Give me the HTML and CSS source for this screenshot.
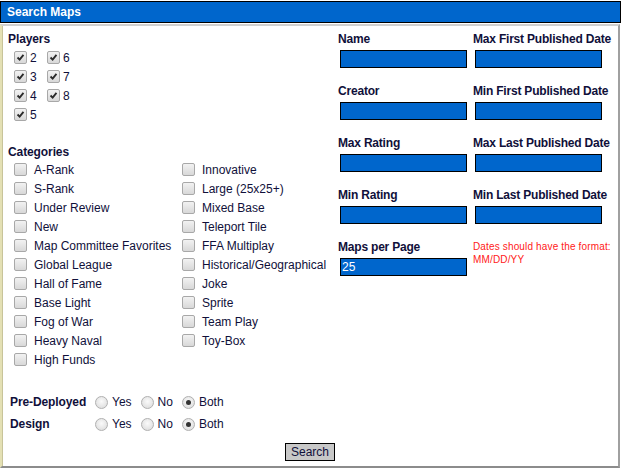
FILE: index.html
```html
<!DOCTYPE html>
<html>
<head>
<meta charset="utf-8">
<link rel="stylesheet" href="styles.css">
</head>
<body>
<div class="header">Search Maps</div>
<div class="box">
  <div class="top">
    <div class="left">
      <div class="heading">Players</div>
      <div class="players">
        <label class="item"><span class="cb on"><svg viewBox="0 0 13 13"><path d="M3 6.5 L5.5 9 L10 3.5" /></svg></span><span>2</span></label>
        <label class="item"><span class="cb on"><svg viewBox="0 0 13 13"><path d="M3 6.5 L5.5 9 L10 3.5" /></svg></span><span>3</span></label>
        <label class="item"><span class="cb on"><svg viewBox="0 0 13 13"><path d="M3 6.5 L5.5 9 L10 3.5" /></svg></span><span>4</span></label>
        <label class="item"><span class="cb on"><svg viewBox="0 0 13 13"><path d="M3 6.5 L5.5 9 L10 3.5" /></svg></span><span>5</span></label>
        <label class="item"><span class="cb on"><svg viewBox="0 0 13 13"><path d="M3 6.5 L5.5 9 L10 3.5" /></svg></span><span>6</span></label>
        <label class="item"><span class="cb on"><svg viewBox="0 0 13 13"><path d="M3 6.5 L5.5 9 L10 3.5" /></svg></span><span>7</span></label>
        <label class="item"><span class="cb on"><svg viewBox="0 0 13 13"><path d="M3 6.5 L5.5 9 L10 3.5" /></svg></span><span>8</span></label>
      </div>
      <div class="heading cat-heading">Categories</div>
      <div class="cats">
        <div class="cat-col first">
          <label class="item"><span class="cb"></span><span>A-Rank</span></label>
          <label class="item"><span class="cb"></span><span>S-Rank</span></label>
          <label class="item"><span class="cb"></span><span>Under Review</span></label>
          <label class="item"><span class="cb"></span><span>New</span></label>
          <label class="item"><span class="cb"></span><span>Map Committee Favorites</span></label>
          <label class="item"><span class="cb"></span><span>Global League</span></label>
          <label class="item"><span class="cb"></span><span>Hall of Fame</span></label>
          <label class="item"><span class="cb"></span><span>Base Light</span></label>
          <label class="item"><span class="cb"></span><span>Fog of War</span></label>
          <label class="item"><span class="cb"></span><span>Heavy Naval</span></label>
          <label class="item"><span class="cb"></span><span>High Funds</span></label>
        </div>
        <div class="cat-col">
          <label class="item"><span class="cb"></span><span>Innovative</span></label>
          <label class="item"><span class="cb"></span><span>Large (25x25+)</span></label>
          <label class="item"><span class="cb"></span><span>Mixed Base</span></label>
          <label class="item"><span class="cb"></span><span>Teleport Tile</span></label>
          <label class="item"><span class="cb"></span><span>FFA Multiplay</span></label>
          <label class="item"><span class="cb"></span><span>Historical/Geographical</span></label>
          <label class="item"><span class="cb"></span><span>Joke</span></label>
          <label class="item"><span class="cb"></span><span>Sprite</span></label>
          <label class="item"><span class="cb"></span><span>Team Play</span></label>
          <label class="item"><span class="cb"></span><span>Toy-Box</span></label>
        </div>
      </div>
    </div>
    <div class="right">
      <div class="field"><div class="flabel">Name</div><div class="input"></div></div>
      <div class="field"><div class="flabel">Max First Published Date</div><div class="input"></div></div>
      <div class="field"><div class="flabel">Creator</div><div class="input"></div></div>
      <div class="field"><div class="flabel">Min First Published Date</div><div class="input"></div></div>
      <div class="field"><div class="flabel">Max Rating</div><div class="input"></div></div>
      <div class="field"><div class="flabel">Max Last Published Date</div><div class="input"></div></div>
      <div class="field"><div class="flabel">Min Rating</div><div class="input"></div></div>
      <div class="field"><div class="flabel">Min Last Published Date</div><div class="input"></div></div>
      <div class="field"><div class="flabel">Maps per Page</div><div class="input">25</div></div>
      <div class="field note">Dates should have the format:<br>MM/DD/YY</div>
    </div>
  </div>
  <div class="radios">
    <div class="rrow">
      <span class="rlabel">Pre-Deployed</span>
      <span class="ropt"><span class="rb"></span>Yes</span>
      <span class="ropt"><span class="rb"></span>No</span>
      <span class="ropt"><span class="rb on"></span>Both</span>
    </div>
    <div class="rrow">
      <span class="rlabel">Design</span>
      <span class="ropt"><span class="rb"></span>Yes</span>
      <span class="ropt"><span class="rb"></span>No</span>
      <span class="ropt"><span class="rb on"></span>Both</span>
    </div>
  </div>
  <div class="actions"><span class="btn">Search</span></div>
</div>
</body>
</html>
```

FILE: styles.css
```css
html, body {
  margin: 0;
  padding: 0;
  background: #ffffff;
}
body {
  font-family: "Liberation Sans", Arial, sans-serif;
  font-size: 12px;
  color: #10103a;
  width: 621px;
  height: 469px;
  overflow: hidden;
}
.header {
  margin-top: 1px;
  height: 20px;
  line-height: 20px;
  border: 1px solid #000;
  background: #0066cc;
  color: #fff;
  font-weight: bold;
  padding-left: 6px;
}
.box {
  margin-top: 1px;
  width: 616px;
  height: 440px;
  border-style: solid;
  border-width: 2px;
  border-color: #d0d0d0 #a0a0a0 #8c8c8c #e4e0b4;
  box-shadow: inset 1px 0 0 #c8c49a;
}
.top {
  display: flex;
}
.left {
  width: 330px;
  padding: 6px 0 0 6px;
}
.heading {
  font-weight: bold;
  line-height: 14px;
  letter-spacing: -0.1px;
}
.players {
  display: grid;
  grid-template-rows: repeat(4, 19px);
  grid-auto-flow: column;
  grid-template-columns: 33px auto;
  margin: 2px 0 0 6px;
}
.item {
  display: flex;
  align-items: center;
  height: 19px;
  gap: 3px;
}
.cat-heading {
  margin-top: 21px;
}
.cats {
  display: flex;
  margin: 1px 0 0 6px;
}
.cat-col {
  display: flex;
  flex-direction: column;
}
.cat-col.first {
  width: 168px;
}
.cat-col .item {
  gap: 7px;
}
.cb {
  width: 11px;
  height: 11px;
  border: 1px solid #a8a8a8;
  border-radius: 2px;
  background: linear-gradient(#f2f2f2, #d8d8d8);
  display: inline-flex;
  align-items: center;
  justify-content: center;
}
.cb svg {
  width: 11px;
  height: 11px;
}
.cb svg path {
  fill: none;
  stroke: #2a2a2a;
  stroke-width: 2.2;
}
.right {
  display: grid;
  grid-template-columns: 135px 140px;
  grid-auto-rows: 52px;
  padding-top: 6px;
}
.field {
  display: flex;
  flex-direction: column;
}
.flabel {
  font-weight: bold;
  line-height: 14px;
  white-space: nowrap;
  letter-spacing: -0.2px;
}
.input {
  margin: 4px 0 0 2px;
  width: 124px;
  height: 16px;
  border: 1px solid #000;
  background: #0066cc;
  color: #fff;
  line-height: 16px;
  padding-left: 1px;
  box-sizing: content-box;
}
.note {
  color: #ff2020;
  font-size: 10px;
  line-height: 13px;
  letter-spacing: 0.15px;
  white-space: nowrap;
}
.radios {
  margin-top: 22px;
  padding-left: 8px;
}
.rrow {
  display: flex;
  align-items: center;
  height: 22px;
}
.rlabel {
  font-weight: bold;
  width: 85px;
  letter-spacing: -0.1px;
}
.ropt {
  display: flex;
  align-items: center;
  gap: 4px;
  margin-right: 9px;
}
.rb {
  width: 11px;
  height: 11px;
  border: 1px solid #b0b0b0;
  border-radius: 50%;
  background: radial-gradient(circle at 50% 40%, #fafafa, #d8d8d8);
  position: relative;
}
.rb.on::after {
  content: "";
  position: absolute;
  left: 3px;
  top: 3px;
  width: 5px;
  height: 5px;
  border-radius: 50%;
  background: #333;
}
.actions {
  display: flex;
  justify-content: center;
  margin-top: 8px;
}
.btn {
  display: inline-block;
  border: 1px solid #000;
  background: #c8c8c8;
  padding: 0 5px;
  height: 16px;
  line-height: 16px;
  color: #10103a;
}
```
